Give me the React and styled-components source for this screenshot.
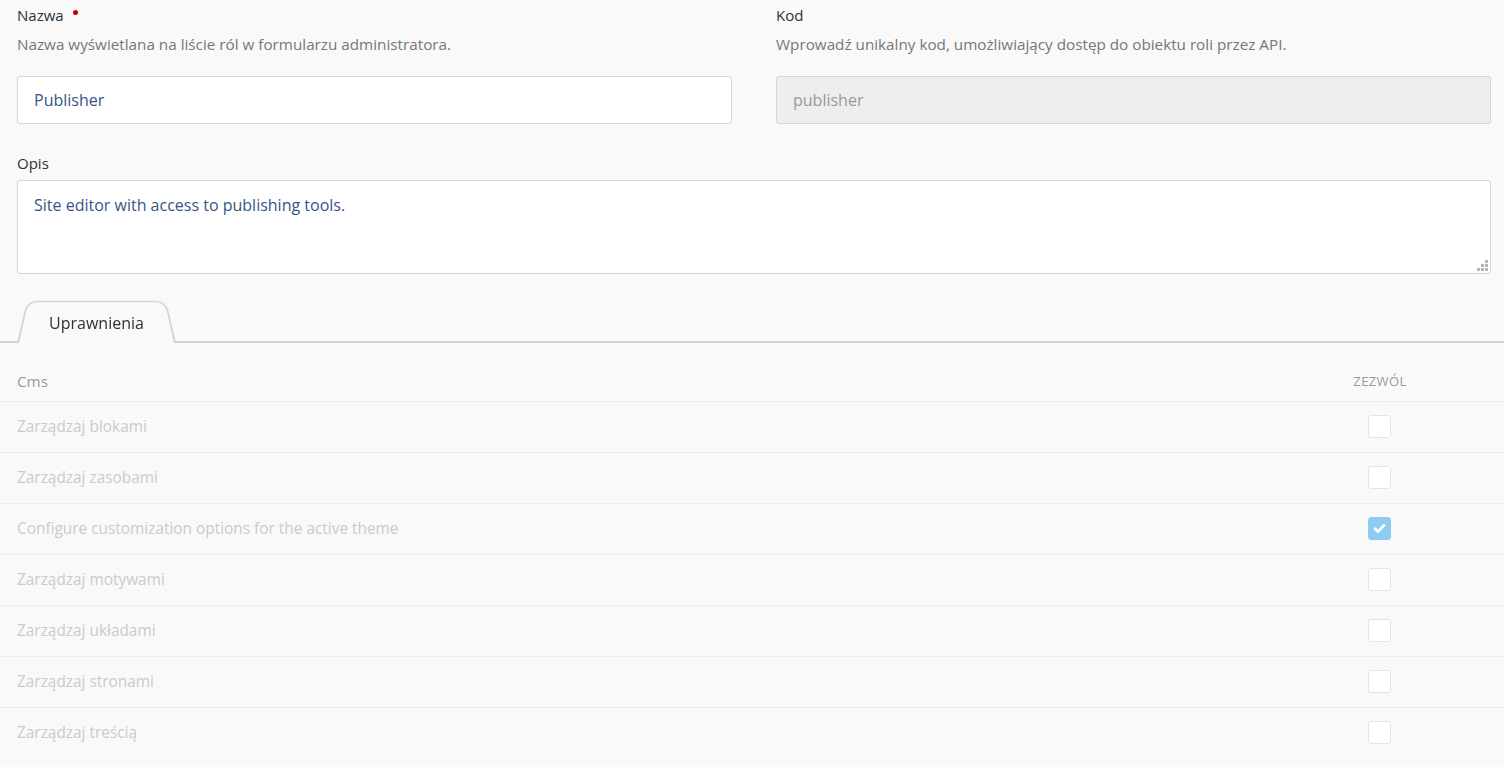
import React from 'react'
import styled, { createGlobalStyle } from 'styled-components'

const GlobalStyle = createGlobalStyle`
  html, body {
    margin: 0;
    padding: 0;
    background: #f9f9f9;
    font-family: "Open Sans", "Noto Sans", sans-serif;
  }
  * { box-sizing: border-box; }
`

const permissions = [
  { label: 'Zarządzaj blokami', checked: false },
  { label: 'Zarządzaj zasobami', checked: false },
  { label: 'Configure customization options for the active theme', checked: true },
  { label: 'Zarządzaj motywami', checked: false },
  { label: 'Zarządzaj układami', checked: false },
  { label: 'Zarządzaj stronami', checked: false },
  { label: 'Zarządzaj treścią', checked: false },
]

function Grip() {
  const dots = [[8, 0], [4, 4], [8, 4], [0, 8], [4, 8], [8, 8]]
  return (
    <GripIcon width="11" height="11" viewBox="0 0 11 11">
      {dots.map(([x, y]) => (
        <rect key={`${x}-${y}`} x={x} y={y} width="3" height="3" fill="#b5b5b5" />
      ))}
    </GripIcon>
  )
}

export default function App() {
  return (
    <Page>
      <GlobalStyle />
      <Form>
        <FieldRow>
          <Field>
            <Label required>Nazwa</Label>
            <Help>Nazwa wyświetlana na liście ról w formularzu administratora.</Help>
            <Input defaultValue="Publisher" />
          </Field>
          <Field>
            <Label>Kod</Label>
            <Help>Wprowadź unikalny kod, umożliwiający dostęp do obiektu roli przez API.</Help>
            <Input defaultValue="publisher" disabled />
          </Field>
        </FieldRow>
        <Field>
          <Label>Opis</Label>
          <AreaWrap>
            <TextArea defaultValue="Site editor with access to publishing tools." />
            <Grip />
          </AreaWrap>
        </Field>
      </Form>

      <Tabs>
        <Tab>Uprawnienia</Tab>
      </Tabs>

      <Table>
        <thead>
          <tr>
            <Th>Cms</Th>
            <Th center>Zezwól</Th>
          </tr>
        </thead>
        <tbody>
          {permissions.map(p => (
            <tr key={p.label}>
              <Td>{p.label}</Td>
              <Td center>
                <Check checked={p.checked}>
                  {p.checked && (
                    <svg width="13" height="11" viewBox="0 0 13 11">
                      <path d="M2 5.8 L5 8.6 L11 2.4" fill="none" stroke="#fff" strokeWidth="2.8" strokeLinecap="round" strokeLinejoin="round" />
                    </svg>
                  )}
                </Check>
              </Td>
            </tr>
          ))}
        </tbody>
      </Table>
    </Page>
  )
}

const Page = styled.div`
  min-height: 767px;
  background: #f9f9f9;
`

const Form = styled.div`
  padding: 4px 13px 0 17px;
  display: flex;
  flex-direction: column;
  gap: 28px;
`

const FieldRow = styled.div`
  display: grid;
  grid-template-columns: 1fr 1fr;
  gap: 44px;
`

const Field = styled.div`
  display: flex;
  flex-direction: column;
`

const Label = styled.label`
  font-size: 15px;
  color: #2b3238;
  line-height: 22px;
  ${p => p.required && `
    &::after {
      content: '';
      display: inline-block;
      width: 5px;
      height: 5px;
      border-radius: 50%;
      background: #c20000;
      margin-left: 9px;
      vertical-align: 6px;
    }
  `}
`

const Help = styled.div`
  font-size: 15.25px;
  color: #777;
  line-height: 20px;
  margin-top: 8px;
  margin-bottom: 22px;
`

const Input = styled.input`
  height: 48px;
  width: 100%;
  border: 1px solid #d1d6d9;
  border-radius: 3px;
  background: #fff;
  padding: 0 16px;
  font: inherit;
  font-size: 16px;
  color: #385487;
  outline: none;
  &:disabled {
    background: #eee;
    color: #999;
  }
`

const AreaWrap = styled.div`
  position: relative;
  margin-top: 6px;
  display: flex;
`

const TextArea = styled.textarea`
  height: 94px;
  width: 100%;
  border: 1px solid #d1d6d9;
  border-radius: 3px;
  background: #fff;
  padding: 13px 16px 9px;
  font: inherit;
  font-size: 16px;
  color: #385487;
  outline: none;
  resize: none;
`

const GripIcon = styled.svg`
  position: absolute;
  right: 3px;
  bottom: 3px;
`

const Tabs = styled.div`
  margin-top: 25px;
  padding-left: 17px;
  border-bottom: 2px solid #d4d4d4;
  display: flex;
  height: 44px;
`

const Tab = styled.div`
  position: relative;
  width: 159px;
  display: flex;
  align-items: center;
  justify-content: center;
  font-size: 16px;
  color: #2b3238;
  padding-top: 4px;
  margin-bottom: -2px;
  z-index: 1;
  &::before {
    content: '';
    position: absolute;
    inset: -5px 0 0 0;
    background: #f9f9f9;
    border: 2px solid #d4d4d4;
    border-bottom: none;
    border-radius: 12px 12px 0 0;
    transform: perspective(60px) rotateX(10deg);
    transform-origin: bottom;
    z-index: -1;
  }
`

const Table = styled.table`
  width: 100%;
  border-collapse: collapse;
  margin-top: 16px;
  tr { border-bottom: 1px solid #ececec; }
  tbody tr:last-child { border-bottom: none; }
`

const Th = styled.th`
  font-weight: 400;
  color: #999;
  height: 42px;
  padding: 2px 0 0 ${p => (p.center ? '0' : '17px')};
  text-align: ${p => (p.center ? 'center' : 'left')};
  text-transform: ${p => (p.center ? 'uppercase' : 'none')};
  font-size: ${p => (p.center ? '13px' : '15.25px')};
  letter-spacing: ${p => (p.center ? '0.4px' : '0')};
  width: ${p => (p.center ? '248px' : 'auto')};
`

const Td = styled.td`
  font-size: 15.4px;
  color: #cbcbcb;
  height: 51px;
  padding: 0 0 0 ${p => (p.center ? '0' : '17px')};
  text-align: ${p => (p.center ? 'center' : 'left')};
`

const Check = styled.span`
  display: inline-flex;
  align-items: center;
  justify-content: center;
  vertical-align: middle;
  width: 23px;
  height: 23px;
  margin-left: -2px;
  border-radius: 3px;
  border: 1px solid ${p => (p.checked ? '#8ecbf0' : '#e4e4e4')};
  background: ${p => (p.checked ? '#8ecbf0' : '#fff')};
`
